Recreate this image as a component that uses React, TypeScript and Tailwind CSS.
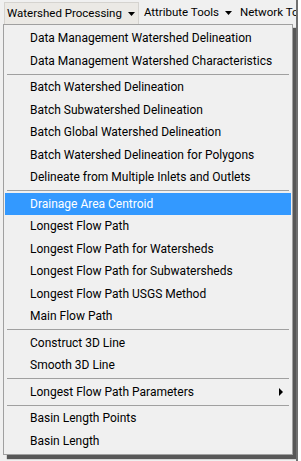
import React from 'react';

type Entry = { label: string; active?: boolean; sub?: boolean } | 'sep';

const ITEMS: Entry[] = [
  { label: 'Data Management Watershed Delineation' },
  { label: 'Data Management Watershed Characteristics' },
  'sep',
  { label: 'Batch Watershed Delineation' },
  { label: 'Batch Subwatershed Delineation' },
  { label: 'Batch Global Watershed Delineation' },
  { label: 'Batch Watershed Delineation for Polygons' },
  { label: 'Delineate from Multiple Inlets and Outlets' },
  'sep',
  { label: 'Drainage Area Centroid', active: true },
  { label: 'Longest Flow Path' },
  { label: 'Longest Flow Path for Watersheds' },
  { label: 'Longest Flow Path for Subwatersheds' },
  { label: 'Longest Flow Path USGS Method' },
  { label: 'Main Flow Path' },
  'sep',
  { label: 'Construct 3D Line' },
  { label: 'Smooth 3D Line' },
  'sep',
  { label: 'Longest Flow Path Parameters', sub: true },
  'sep',
  { label: 'Basin Length Points' },
  { label: 'Basin Length' },
];

const DownArrow = () => (
  <svg width="7" height="4" viewBox="0 0 7 4" className="ml-[6px] shrink-0">
    <path d="M0 0H7L3.5 4Z" fill="#000" />
  </svg>
);

export default function App() {
  return (
    <div className="w-[301px] h-[461px] bg-white overflow-hidden font-['Roboto',sans-serif] text-[12px] text-black">
      <div className="w-[298px] h-[461px] bg-[#f0f0f0] border-r-2 border-[#707070] overflow-hidden">
        <div className="flex items-end h-[24px] pl-[4px] whitespace-nowrap text-[11.5px]">
          <div className="flex shrink-0 items-center h-[22px] pl-[2px] pr-[3px] bg-[#ebe9e5] border border-b-0 border-[#d5d3cf]">
            <span>Watershed Processing</span>
            <DownArrow />
          </div>
          <div className="flex shrink-0 items-center h-[22px] pl-[5px]">
            <span>Attribute Tools</span>
            <DownArrow />
            <span className="ml-[8px]">Network To</span>
          </div>
        </div>
        <div className="ml-[3px] w-[290px] border border-[#a0a0a0] bg-[#f0f0f0] py-[2px] shadow-[4px_4px_1px_rgba(50,50,50,0.8)]">
          {ITEMS.map((it, i) =>
            it === 'sep' ? (
              <div key={i} className="h-[4px] flex items-center px-[3px]">
                <div className="h-px w-full bg-[#a0a0a0]" />
              </div>
            ) : (
              <div
                key={i}
                className={
                  it.active
                    ? 'h-[22.5px] mx-px flex items-center pl-[25px] pr-[8px] bg-[#3399ff] text-white'
                    : 'h-[22.5px] mx-px flex items-center pl-[25px] pr-[8px]'
                }
              >
                <span className="flex-1 whitespace-nowrap">{it.label}</span>
                {it.sub && (
                  <svg width="4" height="8" viewBox="0 0 4 8">
                    <path d="M0 0L4 4L0 8Z" fill="#000" />
                  </svg>
                )}
              </div>
            )
          )}
        </div>
      </div>
    </div>
  );
}
